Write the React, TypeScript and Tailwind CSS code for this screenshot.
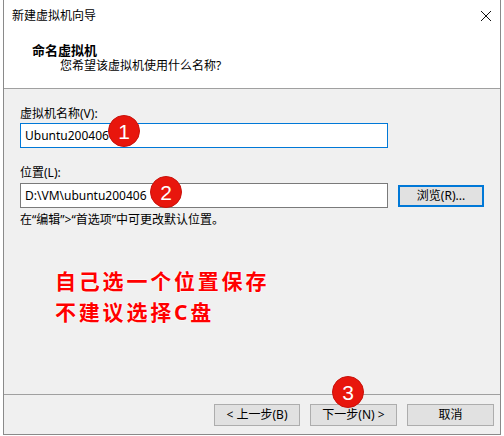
import React from "react"

function Badge({ n, className }: { n: string; className: string }) {
  return (
    <div
      className={`absolute w-[32px] h-[32px] rounded-full bg-[#e8160d] border border-[#c9110a] flex items-center justify-center text-white text-[21px] leading-none font-['Liberation_Sans',sans-serif] ${className}`}
    >
      {n}
    </div>
  )
}

export default function App() {
  const ui = "font-['Noto_Sans','Noto_Sans_CJK_SC',sans-serif]"
  return (
    <div className={`w-[504px] h-[436px] bg-white ${ui} text-[12px] text-black`}>
      <div className="relative ml-[3px] w-[498px] h-[435px] border-l border-r border-b border-[#8a8a8a] flex flex-col">
        {/* title bar */}
        <div className="h-[32px] flex items-center justify-between pl-[8px] pr-[7px] bg-white">
          <span className="leading-[16px]">新建虚拟机向导</span>
          <svg width="12" height="12" viewBox="0 0 12 12" className="mr-[1px]">
            <path d="M1 1 L11 11 M11 1 L1 11" stroke="#111" strokeWidth="1" />
          </svg>
        </div>

        {/* header */}
        <div className="h-[57px] bg-white border-b border-[#a0a0a0] pl-[28px]">
          <div className="mt-[10px] text-[13px] font-bold leading-[16px]">命名虚拟机</div>
          <div className="pl-[28px] leading-[16px]">您希望该虚拟机使用什么名称?</div>
        </div>

        {/* body */}
        <div className="flex-1 bg-[#f0f0f0] px-[16px] pt-[17px] flex flex-col">
          <div className="leading-[16px]">虚拟机名称(V):</div>
          <div className="mt-[1px] w-[368px] h-[25px] bg-white border border-[#0078d7] flex items-center px-[4px]">
            Ubuntu200406
          </div>

          <div className="mt-[17px] leading-[16px]">位置(L):</div>
          <div className="mt-[2px] flex items-center gap-[10px]">
            <div className="w-[368px] h-[25px] bg-white border border-[#7a7a7a] flex items-center px-[4px]">
              D:\VM\ubuntu200406
            </div>
            <button className="w-[86px] h-[22px] bg-[#e1e1e1] border-2 border-[#0078d7] flex items-center justify-center leading-none">
              浏览(R)...
            </button>
          </div>
          <div className="mt-[4px] leading-[16px]">在“编辑”&gt;“首选项”中可更改默认位置。</div>

          <div className="mt-[38px] pl-[35px] text-[21px] leading-[31px] tracking-[2.8px] text-[#ff0000] font-bold [text-shadow:0_0_2px_#fff,0_0_2px_#fff]">
            <div>自己选一个位置保存</div>
            <div>不建议选择C盘</div>
          </div>
        </div>

        {/* footer */}
        <div className="h-[40px] bg-[#f0f0f0] border-t border-[#a0a0a0] flex justify-end gap-[10px] pt-[9px] pr-[6px]">
          <button className="w-[86px] h-[22px] bg-[#e1e1e1] border border-[#adadad] flex items-center justify-center leading-none">
            &lt; 上一步(B)
          </button>
          <button className="w-[87px] h-[22px] bg-[#e1e1e1] border border-[#adadad] flex items-center justify-center leading-none">
            下一步(N) &gt;
          </button>
          <button className="w-[87px] h-[22px] bg-[#e1e1e1] border border-[#adadad] flex items-center justify-center leading-none">
            取消
          </button>
        </div>

        <Badge n="1" className="left-[104px] top-[115px]" />
        <Badge n="2" className="left-[146px] top-[176px]" />
        <Badge n="3" className="left-[328px] top-[376px]" />
      </div>
    </div>
  )
}
